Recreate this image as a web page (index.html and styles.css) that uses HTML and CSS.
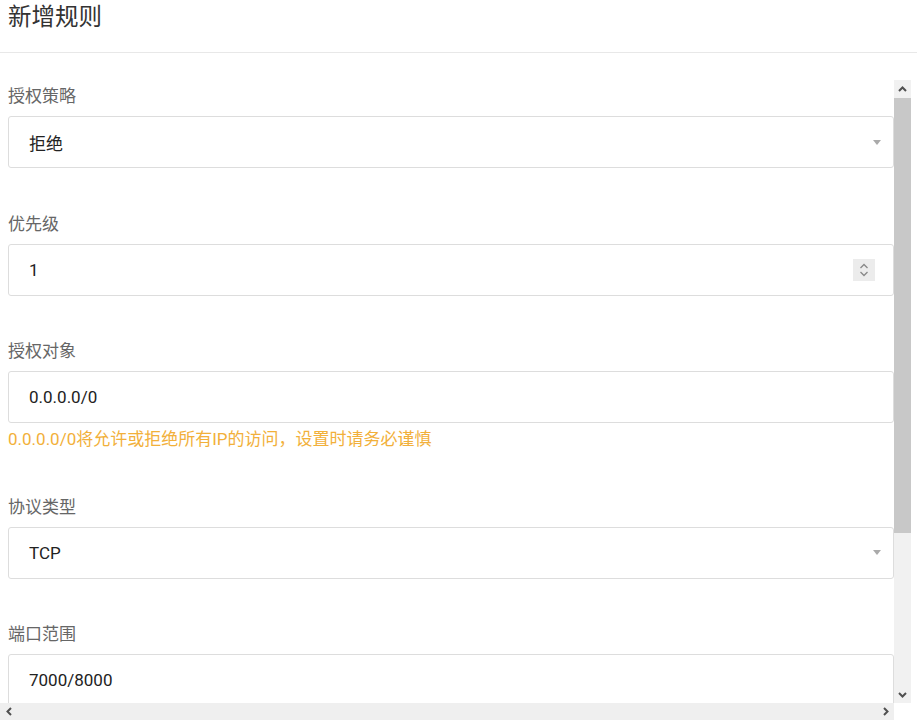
FILE: index.html
```html
<!DOCTYPE html>
<html lang="zh-CN">
<head>
<meta charset="UTF-8" />
<meta name="viewport" content="width=device-width, initial-scale=1" />
<title>新增规则</title>
<link rel="stylesheet" href="styles.css">
</head>
<body>

<header class="dlg-head">
  <h1 class="dlg-title">新增规则</h1>
</header>

<div class="dlg-body">
  <div class="viewport">
    <form class="rule-form">
      <div class="field">
        <label class="field-label">授权策略</label>
        <div class="box select">
          <span class="box-value">拒绝</span>
          <span class="caret"></span>
        </div>
      </div>

      <div class="field">
        <label class="field-label">优先级</label>
        <div class="box">
          <span class="box-value">1</span>
          <span class="spin">
            <svg width="12" height="18" viewBox="0 0 12 18">
              <path d="M2.5 7 L6 3.5 L9.5 7" fill="none" stroke="#888" stroke-width="1.3"/>
              <path d="M2.5 11 L6 14.5 L9.5 11" fill="none" stroke="#888" stroke-width="1.3"/>
            </svg>
          </span>
        </div>
      </div>

      <div class="field">
        <label class="field-label">授权对象</label>
        <div class="box">
          <span class="box-value">0.0.0.0/0</span>
        </div>
        <p class="hint">0.0.0.0/0将允许或拒绝所有IP的访问，设置时请务必谨慎</p>
      </div>

      <div class="field">
        <label class="field-label">协议类型</label>
        <div class="box select">
          <span class="box-value">TCP</span>
          <span class="caret"></span>
        </div>
      </div>

      <div class="field">
        <label class="field-label">端口范围</label>
        <div class="box">
          <span class="box-value">7000/8000</span>
        </div>
      </div>
    </form>
  </div>

  <!-- scrollbars -->
  <div class="vbar">
    <span class="sb-btn">
      <svg width="9" height="6" viewBox="0 0 9 6"><path d="M1 5 L4.5 1.5 L8 5" fill="none" stroke="#505050" stroke-width="2"/></svg>
    </span>
    <div class="vtrack"><div class="vthumb"></div></div>
    <span class="sb-btn">
      <svg width="9" height="6" viewBox="0 0 9 6"><path d="M1 1 L4.5 4.5 L8 1" fill="none" stroke="#505050" stroke-width="2"/></svg>
    </span>
  </div>
  <div class="hbar">
    <span class="sb-btn">
      <svg width="6" height="9" viewBox="0 0 6 9"><path d="M5 1 L1.5 4.5 L5 8" fill="none" stroke="#505050" stroke-width="2"/></svg>
    </span>
    <div class="htrack"></div>
    <span class="sb-btn">
      <svg width="6" height="9" viewBox="0 0 6 9"><path d="M1 1 L4.5 4.5 L1 8" fill="none" stroke="#505050" stroke-width="2"/></svg>
    </span>
  </div>
  <div class="corner"></div>
</div>

</body>
</html>
```

FILE: styles.css
```css
body {
  margin: 0;
  background: #fff;
  color: #333;
  font-family: Roboto, "Noto Sans CJK SC", sans-serif;
}
.dlg-head {
  height: 52px;
  border-bottom: 1px solid #e8e8e8;
}
.dlg-title {
  margin: 0;
  padding-left: 8px;
  font-size: 23.5px;
  font-weight: normal;
  line-height: 34px;
  color: #333;
}
.dlg-body {
  margin-top: 27px;
  width: 911px;
  height: 640px;
  display: grid;
  grid-template-columns: 894px 17px;
  grid-template-rows: 623px 17px;
}
.viewport {
  overflow: hidden;
}
.rule-form {
  width: 886px;
  padding: 4px 16px 200px 8px;
}
.field {
  margin-bottom: 43.5px;
}
.field-label {
  display: block;
  font-size: 17px;
  line-height: 24px;
  color: #666;
  margin-bottom: 8px;
}
.box {
  box-sizing: border-box;
  height: 52px;
  border: 1px solid #ddd;
  border-radius: 3px;
  padding: 0 18px 0 20px;
  display: flex;
  align-items: center;
  justify-content: space-between;
}
.box-value {
  font-size: 17px;
  color: #222;
}
.caret {
  width: 0;
  height: 0;
  border-left: 4.5px solid transparent;
  border-right: 4.5px solid transparent;
  border-top: 5px solid #aaa;
  margin-right: -6px;
}
.spin {
  width: 22px;
  height: 22px;
  background: #ececec;
  display: flex;
  align-items: center;
  justify-content: center;
}
.hint {
  margin: 4px 0 0;
  font-size: 17px;
  line-height: 24px;
  color: #f2b03a;
}

/* scrollbars */
.vbar {
  display: flex;
  flex-direction: column;
  background: #f1f1f1;
}
.hbar {
  display: flex;
  background: #efefef;
}
.sb-btn {
  flex: none;
  width: 17px;
  height: 17px;
  display: flex;
  align-items: center;
  justify-content: center;
}
.vtrack {
  flex: 1;
  padding-top: 1px;
}
.vthumb {
  height: 435px;
  background: #c8c8c8;
}
.htrack {
  flex: 1;
}
.corner {
  background: #fff;
}
```
